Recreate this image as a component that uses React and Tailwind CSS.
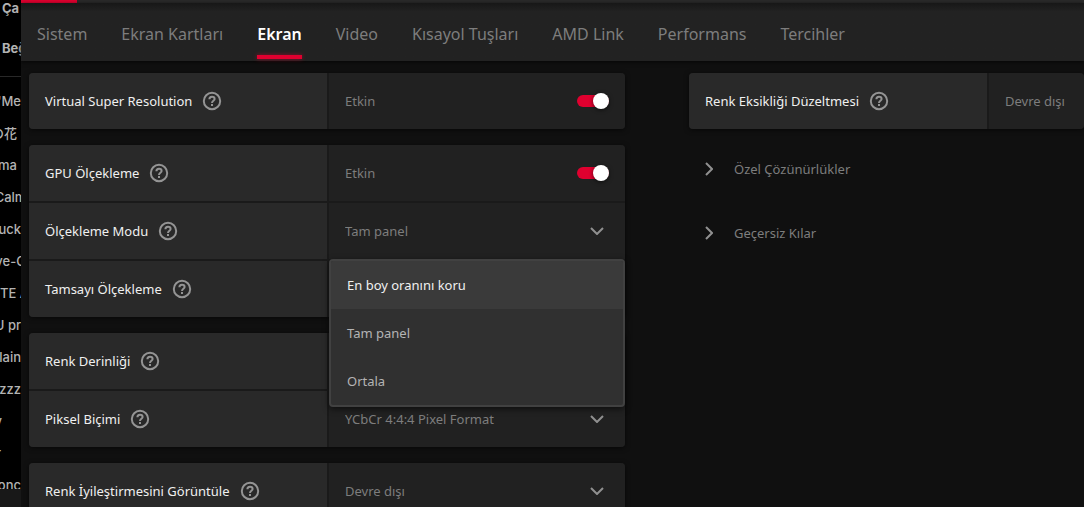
import { useState } from "react";

const tabs = ["Sistem", "Ekran Kartları", "Ekran", "Video", "Kısayol Tuşları", "AMD Link", "Performans", "Tercihler"];

const playlists = [
  { text: "'Me", place: "justify-end" },
  { text: "の花", place: "justify-end pr-1" },
  { text: "ma", place: "justify-end pr-1" },
  { text: "Calm", place: "justify-center" },
  { text: "uck", place: "justify-end" },
  { text: "ve-C", place: "justify-center" },
  { text: "TE A", place: "justify-start" },
  { text: "U pr", place: "justify-end" },
  { text: "lain", place: "justify-end" },
  { text: "zzzz", place: "justify-end" },
  { text: "y", place: "justify-end pr-[19px]" },
  { text: "r", place: "justify-end pr-5" },
  { text: "onc", place: "justify-end" },
];

function Chevron({ className }) {
  return (
    <svg viewBox="0 0 14 8" className={className} fill="none" stroke="currentColor" strokeWidth="2" aria-hidden="true">
      <path d="M1 1l6 6 6-6" />
    </svg>
  );
}

function Help({ label }) {
  return (
    <button type="button" aria-label={`${label} yardım`} className="text-[#949494]">
      <svg viewBox="0 0 22 22" className="size-[22px]" fill="none" stroke="currentColor" strokeWidth="2" aria-hidden="true">
        <circle cx="11" cy="11" r="8.2" />
        <path d="M8.4 9.2C8.4 7.6 9.5 6.7 11 6.7s2.6.9 2.6 2.3c0 1.7-2.6 1.9-2.6 3.9" />
        <path d="M11 14v2" />
      </svg>
    </button>
  );
}

function Row({ label, id, children }) {
  return (
    <div className="grid grid-cols-[298px_1fr] gap-0.5">
      <div className="flex h-14 items-center gap-[9px] bg-[#292929] pl-4 text-[#f0f0f0]">
        <label htmlFor={id}>{label}</label>
        <Help label={label} />
      </div>
      <div className="relative flex h-14 items-center bg-[#212121] text-[#7d7d7d]">{children}</div>
    </div>
  );
}

function Group({ children }) {
  return (
    <div className="rounded shadow-[0_1px_5px_rgba(0,0,0,0.6)]">
      <div className="flex flex-col gap-0.5 overflow-hidden rounded bg-[#1a1a1a]">{children}</div>
    </div>
  );
}

function Toggle({ id }) {
  const [on, setOn] = useState(true);
  return (
    <div className="flex flex-1 items-center justify-between px-4">
      <span>{on ? "Etkin" : "Devre dışı"}</span>
      <span className="relative flex h-4 w-8 items-center">
        <input
          id={id}
          type="checkbox"
          role="switch"
          checked={on}
          onChange={() => setOn(!on)}
          className="peer h-3 w-full appearance-none rounded-full bg-[#555] checked:bg-[#e0002f]"
        />
        <span className="pointer-events-none absolute left-0 size-4 rounded-full bg-white shadow-[0_1px_4px_rgba(0,0,0,0.6)] peer-checked:left-4" />
      </span>
    </div>
  );
}

function Select({ id, options, value, onChange, onMouseDown }) {
  return (
    <>
      <select
        id={id}
        value={value}
        onChange={onChange}
        onMouseDown={onMouseDown}
        className="h-full w-full appearance-none bg-transparent pl-4 pr-10 outline-none"
      >
        {options.map((o) => (
          <option key={o} className="bg-[#303030]">{o}</option>
        ))}
      </select>
      <Chevron className="pointer-events-none absolute right-[21px] h-2 w-3.5 text-[#909090]" />
    </>
  );
}

function PlainSelect({ id, options }) {
  const [value, setValue] = useState(options[0]);
  return <Select id={id} options={options} value={value} onChange={(e) => setValue(e.target.value)} />;
}

const modes = ["En boy oranını koru", "Tam panel", "Ortala"];

function ScalingGroup() {
  const [mode, setMode] = useState("Tam panel");
  const [open, setOpen] = useState(true);
  const [active, setActive] = useState(modes[0]);
  return (
    <div className="relative">
      <Group>
        <Row label="GPU Ölçekleme" id="gpu"><Toggle id="gpu" /></Row>
        <Row label="Ölçekleme Modu" id="mode">
          <Select
            id="mode"
            options={modes}
            value={mode}
            onChange={(e) => setMode(e.target.value)}
            onMouseDown={(e) => {
              e.preventDefault();
              setOpen(!open);
            }}
          />
        </Row>
        <Row label="Tamsayı Ölçekleme" id="integer">{!open && <Toggle id="integer" />}</Row>
      </Group>
      {open && (
        <div
          role="listbox"
          aria-label="Ölçekleme Modu"
          className="absolute left-[300px] right-0 top-[114px] z-10 flex flex-col overflow-hidden rounded border-2 border-[#414141] bg-[#303030] shadow-[0_2px_6px_rgba(0,0,0,0.6)]"
        >
          {modes.map((m) => (
            <button
              key={m}
              type="button"
              role="option"
              aria-selected={m === active}
              onMouseEnter={() => setActive(m)}
              onClick={() => {
                setMode(m);
                setOpen(false);
              }}
              className={`h-12 px-4 text-left ${m === active ? "bg-[#3a3a3a] text-[#f0f0f0]" : "text-[#b4b4b4]"}`}
            >
              {m}
            </button>
          ))}
        </div>
      )}
    </div>
  );
}

function Section({ title }) {
  return (
    <button type="button" className="flex h-16 items-center pl-[13px] text-[#7d7d7d]">
      <Chevron className="h-2 w-3.5 -rotate-90 text-[#909090]" />
      <span className="pl-[18px]">{title}</span>
    </button>
  );
}

export default function App() {
  return (
    <div className="flex h-screen overflow-hidden bg-[#101010] font-['Noto_Sans','Noto_Sans_CJK_JP',sans-serif] text-[13px] leading-5">
      <aside className="flex w-[21px] shrink-0 flex-col overflow-hidden whitespace-nowrap bg-black font-['Inter','Noto_Sans_CJK_JP',sans-serif] text-[#b3b3b3]">
        <div className="flex h-[77px] shrink-0 flex-col gap-6 border-b border-[#282828] pl-0.5 font-bold leading-4">
          <span>Ça</span>
          <span>Beğ</span>
        </div>
        <div className="min-h-0 flex-1 overflow-hidden pt-2">
          {playlists.map((p) => (
            <div key={p.text} className={`flex h-8 items-center font-medium ${p.place}`}>
              <span>{p.text}</span>
            </div>
          ))}
        </div>
        <div className="h-[18px] shrink-0 bg-[#181818]" />
      </aside>

      <div className="flex min-w-0 flex-1 flex-col">
        <div className="h-[3px] shrink-0 bg-[#2a2a2a]">
          <div className="h-1 w-14 bg-[#e0002f]" />
        </div>
        <nav className="flex h-[58px] shrink-0 gap-[34px] bg-[#222222] bg-linear-to-b from-[#171717] to-[#222222] to-15% px-4 text-base shadow-[0_1px_4px_rgba(0,0,0,0.7)]">
          {tabs.map((t) => (
            <a
              key={t}
              href="#"
              className={
                t === "Ekran"
                  ? "relative flex items-center whitespace-nowrap pt-1 font-semibold text-white after:absolute after:inset-x-0 after:bottom-0.5 after:h-1 after:bg-[#e0002f] after:shadow-[0_0_4px_rgba(224,0,47,0.6)]"
                  : "flex items-center whitespace-nowrap pt-1 text-[#7d7d7d]"
              }
            >
              {t}
            </a>
          ))}
        </nav>

        <main className="grid grid-cols-[minmax(0,596px)_minmax(0,1fr)] gap-16 pl-2 pt-3">
          <div className="flex flex-col gap-4">
            <Group>
              <Row label="Virtual Super Resolution" id="vsr"><Toggle id="vsr" /></Row>
            </Group>
            <ScalingGroup />
            <Group>
              <Row label="Renk Derinliği" id="depth"><PlainSelect id="depth" options={["8 bpc"]} /></Row>
              <Row label="Piksel Biçimi" id="pixel"><PlainSelect id="pixel" options={["YCbCr 4:4:4 Pixel Format"]} /></Row>
            </Group>
            <Group>
              <Row label="Renk İyileştirmesini Görüntüle" id="color"><PlainSelect id="color" options={["Devre dışı", "Etkin"]} /></Row>
            </Group>
          </div>
          <div className="flex flex-col gap-2">
            <Group>
              <Row label="Renk Eksikliği Düzeltmesi" id="deficiency">
                <output id="deficiency" className="pl-4">Devre dışı</output>
              </Row>
            </Group>
            <div className="flex flex-col">
              <Section title="Özel Çözünürlükler" />
              <Section title="Geçersiz Kılar" />
            </div>
          </div>
        </main>
      </div>
    </div>
  );
}
